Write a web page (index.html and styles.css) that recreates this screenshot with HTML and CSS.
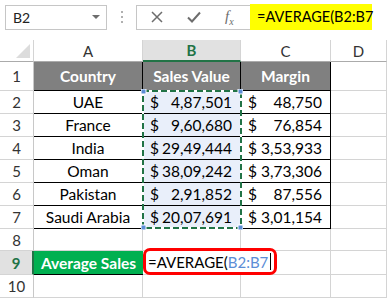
FILE: index.html
```html
<!DOCTYPE html>
<html lang="en">
<head>
    <meta charset="UTF-8">
    <meta name="viewport" content="width=device-width, initial-scale=1.0">
    <title>AVERAGE</title>
    <link rel="stylesheet" href="styles.css">
</head>
<body>
    <div class="bar">
        <div class="name-box">
            <span>B2</span>
            <span class="drop"></span>
        </div>
        <div class="dots"><i></i><i></i><i></i></div>
        <div class="buttons">
            <svg width="12" height="12" viewBox="0 0 12 12"><path d="M1 1L11 11M11 1L1 11" stroke="#6d6d6d" stroke-width="1.5"/></svg>
            <svg width="14" height="12" viewBox="0 0 14 12"><path d="M1 6.5L5 10.5L13 1.5" stroke="#6d6d6d" stroke-width="2" fill="none"/></svg>
            <span class="fx">f<sub>x</sub></span>
        </div>
        <div class="formula">=AVERAGE(B2:B7</div>
    </div>

    <div class="sheet">
        <div class="corner"><span></span></div>
        <div class="col-head">A</div>
        <div class="col-head active">B</div>
        <div class="col-head">C</div>
        <div class="col-head">D</div>

        <div class="row-head">1</div>
        <div class="cell title">Country</div>
        <div class="cell title">Sales Value</div>
        <div class="cell title">Margin</div>
        <div class="blank"></div>

        <div class="row-head">2</div>
        <div class="cell">UAE</div>
        <div class="cell sel money"><span>$</span><span>4,87,501</span></div>
        <div class="cell money"><span>$</span><span>48,750</span></div>
        <div class="blank"></div>

        <div class="row-head">3</div>
        <div class="cell">France</div>
        <div class="cell sel money"><span>$</span><span>9,60,680</span></div>
        <div class="cell money"><span>$</span><span>76,854</span></div>
        <div class="blank"></div>

        <div class="row-head">4</div>
        <div class="cell">India</div>
        <div class="cell sel money"><span>$</span><span>29,49,444</span></div>
        <div class="cell money"><span>$</span><span>3,53,933</span></div>
        <div class="blank"></div>

        <div class="row-head">5</div>
        <div class="cell">Oman</div>
        <div class="cell sel money"><span>$</span><span>38,09,242</span></div>
        <div class="cell money"><span>$</span><span>3,73,306</span></div>
        <div class="blank"></div>

        <div class="row-head">6</div>
        <div class="cell">Pakistan</div>
        <div class="cell sel money"><span>$</span><span>2,91,852</span></div>
        <div class="cell money"><span>$</span><span>87,556</span></div>
        <div class="blank"></div>

        <div class="row-head">7</div>
        <div class="cell">Saudi Arabia</div>
        <div class="cell sel money"><span>$</span><span>20,07,691</span></div>
        <div class="cell money"><span>$</span><span>3,01,154</span></div>
        <div class="blank"></div>

        <div class="row-head">8</div>
        <div class="blank"></div>
        <div class="blank"></div>
        <div class="blank"></div>
        <div class="blank"></div>

        <div class="row-head active">9</div>
        <div class="avg">Average Sales</div>
        <div class="editing"><span class="edit-box">=AVERAGE(<span class="ref">B2:B7</span><span class="caret"></span></span></div>
        <div class="blank"></div>

        <div class="row-head">10</div>
        <div class="blank"></div>
        <div class="blank"></div>
        <div class="blank"></div>
        <div class="blank"></div>

        <!-- marquee round B2:B7 -->
        <svg class="marquee" width="102" height="141" viewBox="0 0 102 141">
            <rect x="2" y="2" width="98" height="137" fill="none" stroke="#ffffff" stroke-width="2"/>
            <rect x="2" y="2" width="98" height="137" fill="none" stroke="#217346" stroke-width="2" stroke-dasharray="6 3"/>
            <rect x="0" y="0" width="5" height="5" fill="#5b8dd6" stroke="#fff" stroke-width="1"/>
            <rect x="97" y="0" width="5" height="5" fill="#5b8dd6" stroke="#fff" stroke-width="1"/>
            <rect x="0" y="136" width="5" height="5" fill="#5b8dd6" stroke="#fff" stroke-width="1"/>
            <rect x="97" y="136" width="5" height="5" fill="#5b8dd6" stroke="#fff" stroke-width="1"/>
        </svg>
    </div>
</body>
</html>
```

FILE: styles.css
```css
*{
    box-sizing: border-box;
}
body{
    margin: 0;
    width: 387px;
    height: 298px;
    overflow: hidden;
    background-color: #ffffff;
    font-family: Lato, "Noto Sans", sans-serif;
    color: #000;
}
.bar{
    display: flex;
    align-items: center;
    height: 40px;
    padding: 0 0 6px 5px;
}
.name-box{
    display: flex;
    align-items: center;
    justify-content: space-between;
    width: 102px;
    height: 25px;
    padding: 0 6px 0 7px;
    border: 1px solid #c6c6c6;
    font-size: 14px;
    color: #222;
}
.drop{
    width: 0;
    height: 0;
    border-left: 4px solid transparent;
    border-right: 4px solid transparent;
    border-top: 4px solid #6d6d6d;
}
.dots{
    display: flex;
    flex-direction: column;
    gap: 3px;
    margin: 0 13px 0 14px;
}
.dots>i{
    width: 2px;
    height: 2px;
    background-color: #b0b0b0;
}
.buttons{
    display: flex;
    align-items: center;
    width: 114px;
    height: 25px;
    padding-left: 14px;
    border: 1px solid #c6c6c6;
    border-right: none;
}
.buttons>svg:nth-child(2){
    margin-left: 24px;
}
.fx{
    margin-left: 24px;
    font-family: "Liberation Serif", serif;
    font-style: italic;
    font-size: 15px;
    color: #6d6d6d;
}
.fx>sub{
    font-size: 10px;
}
.formula{
    width: 122px;
    height: 26px;
    padding-left: 7px;
    line-height: 26px;
    background-color: #ffff00;
    font-size: 14.5px;
    white-space: nowrap;
}
.sheet{
    position: relative;
    display: grid;
    grid-template-columns: 34px 109px 98px 90px 1fr;
    grid-template-rows: 22px 29px repeat(6, 23px) 22px 24px 23px;
}
.corner{
    border-right: 1px solid #d4d4d4;
    border-bottom: 1px solid #ababab;
    display: flex;
    align-items: flex-end;
    justify-content: flex-end;
    padding: 0 3px 3px 0;
}
.corner>span{
    width: 0;
    height: 0;
    border-left: 14px solid transparent;
    border-bottom: 14px solid #dcdcdc;
}
.col-head{
    display: flex;
    align-items: center;
    justify-content: center;
    border-right: 1px solid #d4d4d4;
    border-bottom: 1px solid #ababab;
    font-size: 15px;
    color: #333;
}
.col-head.active{
    background-color: #e1e1e1;
    border-bottom: 2px solid #217346;
    color: #217346;
    font-weight: bold;
}
.row-head{
    display: flex;
    align-items: center;
    justify-content: center;
    border-right: 1px solid #c8c8c8;
    border-bottom: 1px solid #d4d4d4;
    font-size: 15px;
    color: #333;
}
.row-head.active{
    background-color: #e1e1e1;
    font-weight: bold;
    color: #217346;
    border-right: 2px solid #217346;
}
.blank{
    border-right: 1px solid #d4d4d4;
    border-bottom: 1px solid #d4d4d4;
}
.cell{
    display: flex;
    align-items: center;
    justify-content: center;
    border-right: 1px solid #000;
    border-bottom: 1px solid #000;
    font-size: 15.5px;
}
.title{
    background-color: #808080;
    color: #ffffff;
    font-weight: bold;
}
.money{
    justify-content: space-between;
    padding: 0 8px 0 7px;
}
.sel{
    background-color: #e9effa;
    border-right-color: transparent;
}
.avg{
    display: flex;
    align-items: center;
    justify-content: center;
    background-color: #00b050;
    color: #ffffff;
    font-weight: bold;
    font-size: 15.5px;
    border-bottom: 1px solid #000;
}
.editing{
    grid-column: span 2;
    display: flex;
    align-items: center;
    border-bottom: 1px solid #d4d4d4;
    border-right: 1px solid #d4d4d4;
}
.edit-box{
    display: flex;
    align-items: center;
    height: 27px;
    margin-top: -2px;
    padding: 0 3px 0 2px;
    border: 3px solid #ff0000;
    border-radius: 7px;
    background-color: #fff;
    font-size: 15px;
    white-space: nowrap;
}
.ref{
    color: #5b8dd6;
}
.caret{
    width: 1px;
    height: 17px;
    margin-left: 2px;
    background-color: #000;
}
.marquee{
    position: absolute;
    left: 141px;
    top: 49px;
}
```
